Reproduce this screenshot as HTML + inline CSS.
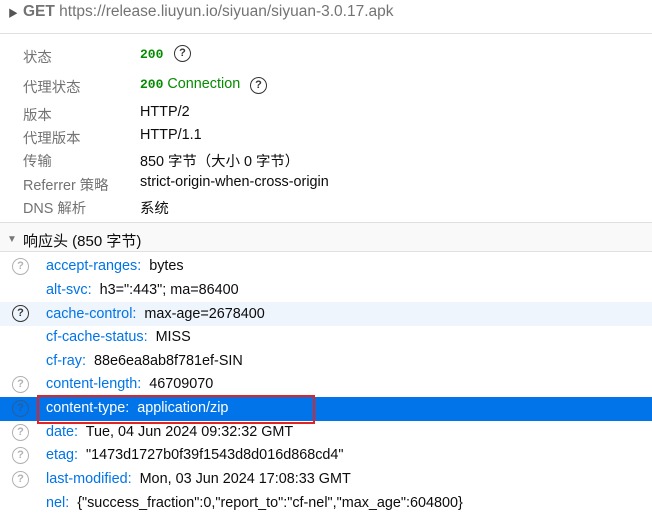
<!DOCTYPE html>
<html><head><meta charset="utf-8"><style>
body{margin:0;width:652px;height:520px;overflow:hidden;background:#fff;font-family:"Liberation Sans","Noto Sans CJK SC",sans-serif;font-size:14.4px;color:#0c0c0d;position:relative}
.a{position:absolute;white-space:nowrap}
.lbl{color:#737373;left:23px}
.val{left:140px}
.g{color:#058b00}
.mono{font-family:"Liberation Mono",monospace;font-weight:bold;font-size:13px}
.k{color:#0074e8}
.q{position:absolute;width:15px;height:15px;border:1.5px solid #b1b1b3;border-radius:50%;font-size:11px;line-height:15px;text-align:center;color:#b1b1b3;font-weight:bold}
.qd{border-color:#333;color:#333}
.row{position:absolute;left:0;width:652px;height:24px}
</style></head><body>
<div class="a" style="left:8px;top:5px;color:#555;font-size:10px">▶</div>
<div class="a" style="left:23px;top:3px;color:#737373;font-size:15.5px"><b>GET</b> https://release.liuyun.io/siyuan/siyuan-3.0.17.apk</div>
<div style="position:absolute;left:0;top:33px;width:652px;height:1px;background:#e0e0e2"></div>
<div class="a lbl" style="top:46px">状态</div><div class="a val g mono" style="top:47px">200</div><div class="q qd" style="left:174px;top:45px">?</div>
<div class="a lbl" style="top:76px">代理状态</div><div class="a val g" style="top:76px"><span class="mono">200</span> Connection</div><div class="q qd" style="left:250px;top:77px">?</div>
<div class="a lbl" style="top:104px">版本</div><div class="a val" style="top:104px">HTTP/2</div>
<div class="a lbl" style="top:127px">代理版本</div><div class="a val" style="top:127px">HTTP/1.1</div>
<div class="a lbl" style="top:150px">传输</div><div class="a val" style="top:150px">850 字节（大小 0 字节）</div>
<div class="a lbl" style="top:174px">Referrer 策略</div><div class="a val" style="top:174px">strict-origin-when-cross-origin</div>
<div class="a lbl" style="top:197px">DNS 解析</div><div class="a val" style="top:197px">系统</div>
<div style="position:absolute;left:0;top:222px;width:652px;height:28px;background:#f9f9fa;border-top:1px solid #e0e0e2;border-bottom:1px solid #e0e0e2"></div>
<div class="a" style="left:7px;top:234px;color:#777;font-size:10px">▼</div>
<div class="a" style="left:23px;top:230px;font-size:15px">响应头 (850 字节)</div>
<div class="row" style="top:302px;background:#eef5fd"></div>
<div class="row" style="top:397px;background:#0074e8"></div>
<div class="q" style="left:12px;top:258px">?</div><div class="a" style="left:46px;top:258px"><span class="k">accept-ranges:</span>&nbsp; bytes</div>
<div class="a" style="left:46px;top:282px"><span class="k">alt-svc:</span>&nbsp; h3=":443"; ma=86400</div>
<div class="q qd" style="left:12px;top:305px">?</div><div class="a" style="left:46px;top:306px"><span class="k">cache-control:</span>&nbsp; max-age=2678400</div>
<div class="a" style="left:46px;top:329px"><span class="k">cf-cache-status:</span>&nbsp; MISS</div>
<div class="a" style="left:46px;top:353px"><span class="k">cf-ray:</span>&nbsp; 88e6ea8ab8f781ef-SIN</div>
<div class="q" style="left:12px;top:376px">?</div><div class="a" style="left:46px;top:376px"><span class="k">content-length:</span>&nbsp; 46709070</div>
<div class="q" style="left:12px;top:400px;border-color:#2a5d9a;color:#2a5d9a">?</div><div class="a" style="left:46px;top:400px;color:#fff">content-type:&nbsp; application/zip</div>
<div style="position:absolute;left:37px;top:395px;width:278px;height:29px;border:2px solid #e5221f;box-sizing:border-box"></div>
<div class="q" style="left:12px;top:424px">?</div><div class="a" style="left:46px;top:424px"><span class="k">date:</span>&nbsp; Tue, 04 Jun 2024 09:32:32 GMT</div>
<div class="q" style="left:12px;top:447px">?</div><div class="a" style="left:46px;top:447px"><span class="k">etag:</span>&nbsp; "1473d1727b0f39f1543d8d016d868cd4"</div>
<div class="q" style="left:12px;top:471px">?</div><div class="a" style="left:46px;top:471px"><span class="k">last-modified:</span>&nbsp; Mon, 03 Jun 2024 17:08:33 GMT</div>
<div class="a" style="left:46px;top:495px"><span class="k">nel:</span>&nbsp; {"success_fraction":0,"report_to":"cf-nel","max_age":604800}</div>
</body></html>
